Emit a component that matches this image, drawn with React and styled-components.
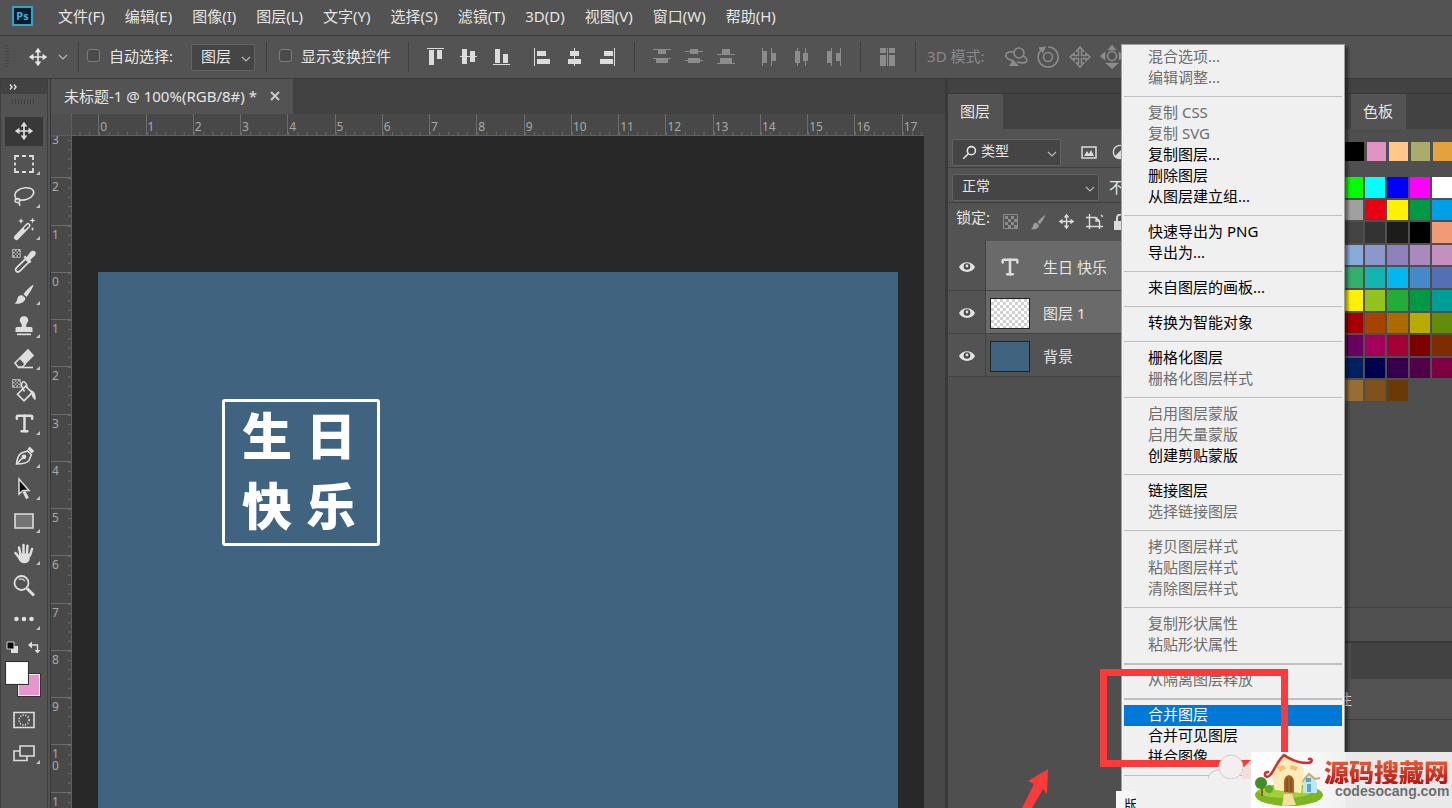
//App.jsx
import styled, { createGlobalStyle, css } from "styled-components";
import { Type } from "lucide-react";

const GlobalStyles = createGlobalStyle`
  * {
    box-sizing: border-box;
  }

  body {
    margin: 0;
    overflow: hidden;
    background: #535353;
    color: #e6e6e6;
    font-family: 'Noto Sans', 'Noto Sans CJK SC', sans-serif;
    font-size: 15px;
    line-height: 20px;
  }

  button, select, input {
    font: inherit;
    color: inherit;
    margin: 0;
  }

  button {
    padding: 0;
    border: none;
    background: none;
  }

  svg {
    display: block;
    flex: none;
  }
`;

const Window = styled.div`
  position: relative;
  display: flex;
  flex-direction: column;
  height: 100vh;
  overflow: hidden;
`;

/* ---------- top bars ---------- */

const MenuBar = styled.nav`
  display: flex;
  align-items: center;
  gap: 20px;
  height: 36px;
  padding: 0 12px 3px;
  border-bottom: 1px solid #3a3a3a;
`;

const Logo = styled.div`
  width: 21px;
  height: 20px;
  margin-right: 5px;
  border: 2px solid #2fa3cc;
  background: #021b2b;
  color: #35b4e0;
  font-size: 11px;
  font-weight: 700;
  line-height: 15px;
  text-align: center;
`;

const MenuButton = styled.button`
  font-size: 15px;
  white-space: nowrap;
`;

const OptionsBar = styled.div`
  display: flex;
  align-items: center;
  height: 43px;
  padding-left: 5px;
  border-bottom: 1px solid #3a3a3a;
  white-space: nowrap;
`;

const Grip = styled.div`
  width: 4px;
  height: 24px;
  margin-right: 19px;
  background: repeating-linear-gradient(#444 0 1px, transparent 1px 3px);
`;

const Divider = styled.div`
  width: 1px;
  height: 30px;
  margin-left: ${(p) => p.$before}px;
  margin-right: ${(p) => p.$after}px;
  background: #404040;
`;

const CheckLabel = styled.label`
  display: flex;
  align-items: center;
  gap: 9px;
  padding-bottom: 3px;
`;

const CheckBox = styled.input`
  appearance: none;
  width: 13px;
  height: 13px;
  border: 1px solid #7d7d7d;
  border-radius: 3px;
  background: #4a4a4a;
`;

const SelectWrap = styled.div`
  position: relative;
  display: flex;
  align-items: center;
  width: ${(p) => p.$width}px;
  height: 27px;
  border: 1px solid #636363;
  border-radius: 2px;
  background: #454545;

  svg {
    position: absolute;
    right: 3px;
    top: 9px;
    pointer-events: none;
  }

  svg.lead {
    left: 9px;
    right: auto;
    top: 5px;
  }
`;

const Select = styled.select`
  appearance: none;
  width: 100%;
  height: 25px;
  padding: 0 0 2px ${(p) => p.$indent || 9}px;
  border: none;
  background: none;
  font-size: ${(p) => p.$size || 15}px;
`;

const IconGroup = styled.div`
  display: flex;
  gap: ${(p) => p.$gap || 0}px;
  margin-left: ${(p) => p.$before || 0}px;
  margin-right: ${(p) => p.$after || 0}px;
`;

const IconButton = styled.button`
  display: flex;
  align-items: center;
  justify-content: center;
  width: ${(p) => p.$width || 32}px;
  height: 28px;
  color: ${(p) => (p.$dim ? "#8c8c8c" : "#dcdcdc")};
`;

const ModeText = styled.span`
  width: 73px;
  padding-bottom: 2px;
  color: #8a8a8a;
`;

/* ---------- workspace ---------- */

const Workspace = styled.div`
  display: flex;
  flex: 1;
  min-height: 0;
`;

const ToolPanel = styled.aside`
  width: 48px;
  flex: none;
  border-left: 1px solid #3e3e3e;
  border-right: 1px solid #3e3e3e;
  background: #535353;
`;

const ToolPanelHead = styled.div`
  height: 15px;
  padding: 5px 0 0 8px;
  background: #424242;
  color: #dcdcdc;
`;

const ToolGrip = styled.div`
  width: 24px;
  height: 5px;
  margin: 5px 0 11px 11px;
  background: repeating-linear-gradient(90deg, #404040 0 1px, transparent 1px 3px);
`;

const ToolList = styled.div`
  display: grid;
  grid-template-rows: repeat(16, 1fr);
  justify-content: center;
  height: 520px;
`;

const Tool = styled.button`
  position: relative;
  display: flex;
  align-items: center;
  justify-content: center;
  width: 38px;
  color: #dedede;

  ${(p) =>
    p.$active &&
    css`
      height: 29px;
      align-self: center;
      background: #383838;
    `}

  ${(p) =>
    p.$more &&
    css`
      &::after {
        content: "";
        position: absolute;
        right: 3px;
        bottom: 5px;
        border: 2px solid transparent;
        border-right-color: #c4c4c4;
        border-bottom-color: #c4c4c4;
      }
    `}
`;

const ColorBlock = styled.div`
  position: relative;
  height: 63px;
  margin-top: 5px;
`;

const ColorChip = styled.button`
  position: absolute;
  left: ${(p) => p.$x}px;
  top: ${(p) => p.$y}px;
  width: 24px;
  height: 24px;
  border: 1px solid #3a2f2f;
  outline: 1px solid #eee;
  outline-offset: -2px;
  background: ${(p) => p.$color};
`;

const SwapRow = styled.div`
  display: flex;
  justify-content: space-between;
  padding: 1px 6px 0 5px;
  color: #dedede;
`;

const ModeTool = styled(Tool)`
  height: 33px;
  margin: 0 auto;
`;

const DocumentArea = styled.main`
  display: flex;
  flex-direction: column;
  flex: 1;
  min-width: 0;
  margin-left: 3px;
  background: #484848;
  box-shadow: -1px 0 0 #383838;
`;

const TabStrip = styled.div`
  display: flex;
  height: 35px;
  flex: none;
  background: #424242;
`;

const DocumentTab = styled.div`
  display: flex;
  align-items: center;
  gap: 13px;
  padding: 0 13px 1px 13px;
  background: #535353;
  white-space: nowrap;
`;

const View = styled.div`
  display: grid;
  grid-template-columns: 21px 1fr 21px;
  grid-template-rows: 22px 1fr;
  flex: 1;
  min-height: 0;
  color: #a8a8a8;
  font-size: 12px;
  line-height: 12px;
`;

const Corner = styled.div`
  border-right: 1px dotted #6a6a6a;
  border-bottom: 1px dotted #6a6a6a;
  background: #4f4f4f;
`;

const TopRuler = styled.div`
  overflow: hidden;
  border-bottom: 1px solid #606060;
`;

const TopScale = styled.div`
  display: grid;
  grid-template-columns: repeat(19, 1fr);
  width: 898px;
  height: 21px;
  margin-left: -21px;

  span {
    padding: 7px 0 0 1px;
    border-left: 1px solid #6c6c6c;
    background: linear-gradient(90deg, #6c6c6c 1px, transparent 1px) 0 100% / 20% 3px repeat-x;
  }
`;

const SideRuler = styled.div`
  overflow: hidden;
  border-right: 1px solid #606060;
`;

const SideScale = styled.div`
  display: grid;
  grid-template-rows: repeat(15, 1fr);
  height: 709px;
  margin-top: -6px;

  span {
    padding: 3px 10px 0 1px;
    border-top: 1px solid #6c6c6c;
    background: linear-gradient(#6c6c6c 1px, transparent 1px) 100% 0 / 3px 20% repeat-y;
    word-break: break-all;
  }
`;

const Stage = styled.div`
  overflow: hidden;
  padding: 136px 0 0 26px;
  background: #282828;
`;

const ScrollTrack = styled.div`
  grid-column: 3;
  grid-row: 1 / 3;
  background: #484848;
`;

const Artboard = styled.div`
  width: 800px;
  height: 800px;
  padding: 127px 0 0 124px;
  background: #40637f;
`;

const Stamp = styled.div`
  display: grid;
  align-content: center;
  gap: 20px;
  width: 158px;
  height: 147px;
  padding: 0 0 9px 17px;
  border: 3px solid #fff;
  border-radius: 3px;
  color: #fff;
  font-family: 'Noto Sans CJK SC', sans-serif;
  font-size: 50px;
  font-weight: 900;
  line-height: 50px;

  div {
    display: flex;
    gap: 14px;
  }
`;

/* ---------- right panels ---------- */

const Panel = styled.section`
  display: flex;
  flex-direction: column;
  width: ${(p) => p.$width}px;
  flex: none;
  background: #4f4f4f;
  border-left: ${(p) => (p.$edge ? "3px solid #393939" : "none")};
  overflow: hidden;
`;

const PanelHead = styled.div`
  height: 15px;
  flex: none;
  border-bottom: 1px solid #353535;
  background: #424242;
`;

const PanelTabs = styled.div`
  height: 35px;
  flex: none;
  padding-left: ${(p) => p.$indent || 0}px;
  background: #424242;
`;

const PanelTab = styled.button`
  height: 35px;
  padding: 0 13px 2px 12px;
  background: #535353;
`;

const PanelRow = styled.div`
  display: flex;
  align-items: center;
  height: ${(p) => p.$height}px;
  padding: ${(p) => p.$pad || "0 0 0 4px"};
  flex: none;
  border-bottom: 1px solid ${(p) => (p.$plain ? "transparent" : "#3f3f3f")};
  background: #535353;
  white-space: nowrap;
`;

const LockIcons = styled.div`
  display: flex;
  align-items: center;
  gap: 11px;
  margin-left: 13px;
  padding-top: 9px;
  color: #dcdcdc;
`;

const LayerRow = styled.div`
  display: grid;
  grid-template-columns: 38px 48px 1fr;
  align-items: stretch;
  height: ${(p) => p.$height}px;
  flex: none;
  border-bottom: 1px solid #424242;
  background: ${(p) => (p.$selected ? "#6a6a6a" : "#535353")};
`;

const EyeCell = styled.button`
  display: flex;
  align-items: center;
  justify-content: center;
  padding-top: 2px;
  border-right: 1px solid #424242;
  background: #535353;
`;

const ThumbCell = styled.div`
  display: flex;
  align-items: center;
  padding: 2px 0 0 4px;
  color: #dcdcdc;
`;

const Thumb = styled.div`
  width: 40px;
  height: 31px;
  border: 1px solid #222;
  background: ${(p) => p.$fill};
`;

const LayerName = styled.span`
  align-self: center;
  padding: 2px 0 0 9px;
`;

const RecentSwatches = styled.div`
  display: flex;
  gap: 3px;
  flex: none;
  padding: 13px 0 16px 25px;
`;

const SwatchGrid = styled.div`
  display: grid;
  grid-template-columns: repeat(5, 1fr);
  grid-template-rows: repeat(10, 1fr);
  gap: 2px;
  width: 111px;
  height: 224px;
  flex: none;
  margin-left: 22px;
`;

const Swatch = styled.button`
  min-width: 19px;
  min-height: 19px;
  background: ${(p) => p.$color};
`;

const PanelFoot = styled.div`
  height: 36px;
  margin-top: 206px;
  flex: none;
  border-top: 1px solid #424242;
  border-bottom: 2px solid #393939;
  background: #505050;
`;

const PropertyStrip = styled.div`
  height: 36px;
  flex: none;
  margin-left: 31px;
  background: #424242;
`;

/* ---------- overlays ---------- */

const ContextMenu = styled.ul`
  position: absolute;
  top: 44px;
  right: 107px;
  bottom: -20px;
  width: 224px;
  margin: 0;
  padding: 2px 2px 0;
  border: 1px solid #a0a0a0;
  background: #f0f0f0;
  box-shadow: 3px 3px 3px rgba(0, 0, 0, 0.45);
  list-style: none;
`;

const MenuItem = styled.button`
  display: block;
  width: 100%;
  height: 21px;
  padding: 0 0 3px 24px;
  background: ${(p) => (p.$selected ? "#0078d7" : "none")};
  color: ${(p) => (p.$selected ? "#fff" : "#000")};
  line-height: 18px;
  text-align: left;

  &:disabled {
    color: #6d6d6d;
  }
`;

const MenuLine = styled.li`
  height: ${(p) => (p.$thick ? 2 : 1)}px;
  margin: 7px 0 ${(p) => (p.$thick ? 5 : 6)}px;
  background: #bdbfc1;
`;

const Highlight = styled.div`
  position: absolute;
  top: 669px;
  right: 164px;
  width: 188px;
  height: 98px;
  border: 7px solid #fb3a3a;
`;

const Arrow = styled.svg`
  position: absolute;
  top: 768px;
  right: 403px;
`;

const Clouds = styled.svg`
  position: absolute;
  top: 750px;
  right: 200px;
`;

const StrayLabel = styled.div`
  position: absolute;
  top: 791px;
  right: 316px;
  width: 20px;
  height: 30px;
  padding: 4px 0 0 8px;
  overflow: hidden;
  background: #f6f6f6;
  color: #111;
`;

const Watermark = styled.a`
  position: absolute;
  top: 752px;
  right: 0;
  display: flex;
  width: 201px;
  height: 56px;
  background: linear-gradient(90deg, #fdfdfd 0 40px, #f0f0f0 94px, #e9e9e9 94px);
  text-decoration: none;
`;

const WatermarkText = styled.div`
  padding-top: 6px;
  font-weight: 700;

  strong {
    display: block;
    background: linear-gradient(#f0623a, #b81414);
    background-clip: text;
    color: transparent;
    font-family: 'Noto Sans CJK SC', sans-serif;
    font-size: 25px;
    font-weight: 900;
    line-height: 26px;
  }

  small {
    display: block;
    padding-left: 11px;
    color: #6e6e6e;
    font-family: 'Liberation Sans', sans-serif;
    font-size: 14px;
    line-height: 14px;
  }
`;

/* ---------- icons ---------- */

function Icon({ size = 24, children, ...rest }) {
  return (
    <svg
      width={size}
      height={size}
      viewBox="0 0 24 24"
      fill="none"
      stroke="currentColor"
      strokeWidth="1.6"
      {...rest}
    >
      {children}
    </svg>
  );
}

const MoveIcon = ({ size = 24 }) => (
  <Icon size={size} strokeWidth="2">
    <path d="M12 4v16M4 12h16" />
    <path
      d="M12 1l4 5.500h-8zM12 23l-4-5.500h8zM1 12l5.500-4v8zM23 12l-5.500 4v-8z"
      fill="currentColor"
      stroke="none"
    />
  </Icon>
);

const Chevron = () => (
  <svg width="10" height="10" viewBox="0 0 10 10" fill="none" stroke="#b8b8b8" strokeWidth="1.2">
    <path d="M1 3l4 4 4-4" />
  </svg>
);

const BrushIcon = ({ size = 24, color = "currentColor" }) => (
  <Icon size={size} fill={color} stroke="none">
    <path d="M21.5 2.5c-3 1.500-8 6.500-10 9.800l3 2.700c2.700-3.500 6.500-9 7-12.500z" />
    <path d="M10.300 13.200c-3-.4-4.500 1.300-5 3.800-.3 2-1.300 3.500-2.800 4.500 4.500.8 10-.3 11-5.300z" />
  </Icon>
);

const checker = (
  <>
    <path d="M1 1h8v8H1z" fill="#b4b4b4" stroke="none" />
    <path
      d="M2 2h1.500v1.500H2zM5 2h1.500v1.500H5zM3.500 3.500H5V5H3.500zM6.500 3.500H8V5H6.500zM2 5h1.500v1.500H2zM5 5h1.500v1.500H5zM3.500 6.500H5V8H3.500zM6.500 6.500H8V8H6.500z"
      fill="#3a3a3a"
      stroke="none"
    />
  </>
);

const tools = [
  { name: "move", icon: <MoveIcon size={20} />, active: true },
  {
    name: "marquee",
    icon: (
      <Icon>
        <path d="M3 8V4h4M10 4h4M17 4h4v4M21 10.500v3M21 16v4h-4M14 20h-4M7 20H3v-4M3 13.500v-3" strokeWidth="1.800" />
      </Icon>
    ),
  },
  {
    name: "lasso",
    icon: (
      <Icon>
        <path d="M5.500 16C2 13.500 2 9 5.500 6.500 9.500 3.500 17 2.500 20.500 5.500c3 3 0 8-5.500 9.800-3 1-6.500 1-8.500.2" />
        <path d="M8 16.500c0 1.500-1.300 2-2.500 2s-2.500-.7-2.500-2 1-2 2.500-2 2.500.7 2.500 2zM6 18.500c1.500.5 2 1.800 1.500 3.500" strokeWidth="1.400" />
      </Icon>
    ),
  },
  {
    name: "wand",
    icon: (
      <Icon>
        <path d="M4.500 20.500L16 8.500" strokeWidth="5" strokeLinecap="round" />
        <path d="M13 11.500l3-3" stroke="#535353" strokeWidth="2" strokeLinecap="round" />
        <path
          d="M9 1l.8 2.200L12 4l-2.200.8L9 7l-.8-2.200L6 4l2.200-.8zM20.500.5l.8 2.200 2.200.8-2.200.8-.8 2.200-.8-2.200-2.200-.8 2.200-.8zM20.500 10l.6 1.400 1.400.6-1.400.6-.6 1.400-.6-1.400-1.400-.6 1.400-.6z"
          fill="currentColor"
          stroke="none"
        />
      </Icon>
    ),
  },
  {
    name: "eyedropper",
    plain: true,
    icon: (
      <Icon size={26}>
        {checker}
        <path d="M5 21.500c-1.200-1-.8-2.300.2-3.300L13.500 10l3 3-8.200 8.200c-1 1-2.200 1.300-3.300.3z" />
        <path
          d="M11.500 8.500l1.500-1.500 1.500 1.200 3.200-4.200c1.500-1.800 3.500-1.800 4.500-.8s1 3-.8 4.500l-3.700 3.300 1.200 1.500-1.500 1.500z"
          fill="currentColor"
          stroke="none"
        />
      </Icon>
    ),
  },
  { name: "brush", icon: <BrushIcon /> },
  {
    name: "stamp",
    icon: (
      <Icon fill="currentColor" stroke="none">
        <path d="M12 2a4.200 4.200 0 0 1 3 7.200c-.8.900-1 2.300-.5 3.800H19c1 0 1.500.8 1.500 1.800V18h-17v-3.200c0-1 .5-1.800 1.500-1.800h4.500c.5-1.500.3-2.900-.5-3.800A4.200 4.200 0 0 1 12 2z" />
        <path d="M5 19.500h14v1.700H5z" />
      </Icon>
    ),
  },
  {
    name: "eraser",
    icon: (
      <Icon>
        <path d="M8 11l8-8 5 5.500-8 8z" fill="currentColor" />
        <path d="M8 11l-5 5 3 4h4.500l3-3.500" />
        <path d="M6 20.500h15" />
      </Icon>
    ),
  },
  {
    name: "bucket",
    plain: true,
    icon: (
      <Icon size={26}>
        {checker}
        <path d="M6 15l7.500-7.500 6 6-7.500 7.500z" />
        <path d="M12.500 12.500C10 9 9 5.500 10.500 4s3.500.5 4.500 4" strokeWidth="1.400" />
        <path d="M18.500 12c3 1 3.500 3 3.500 7-1.300-.5-1.800-3-3.500-7z" fill="currentColor" />
      </Icon>
    ),
  },
  { name: "type", icon: <Type size={23} strokeWidth={2.600} /> },
  {
    name: "pen",
    icon: (
      <Icon>
        <path d="M4.500 20c.5-5 1.500-9 5-11l6-2 3.800 3.800-2.300 5.500C15 19.500 10.500 20 4.500 20z" />
        <path d="M4.500 20l6.500-6.500" />
        <circle cx="12" cy="12.800" r="1.600" fill="currentColor" />
        <path d="M15.500 5l2.200-2.500 4.500 4.500-2.400 2.400z" fill="currentColor" stroke="none" />
      </Icon>
    ),
  },
  {
    name: "select",
    icon: (
      <Icon>
        <path d="M12 14.500l3.500 7" strokeWidth="3" />
        <path d="M7 2v15l4-3.500h6z" fill="#0a0a0a" strokeWidth="1.500" />
      </Icon>
    ),
  },
  {
    name: "rectangle",
    icon: (
      <Icon>
        <path d="M3 5h18v14H3z" fill="#757575" />
      </Icon>
    ),
  },
  {
    name: "hand",
    icon: (
      <Icon strokeLinecap="round">
        <path d="M8.500 13L7 5.500M11.500 12V3M14.800 12l.7-8.300M18 13.500l2-6.500M7.500 16L3.500 11" strokeWidth="2.500" />
        <path d="M7.500 11.500h10.800l-.8 6c-.5 2.500-2.500 3.800-5 3.800-3 0-4.500-1.300-6-4.300z" fill="currentColor" stroke="none" />
      </Icon>
    ),
  },
  {
    name: "zoom",
    plain: true,
    icon: (
      <Icon>
        <circle cx="9.500" cy="9" r="7" strokeWidth="1.800" />
        <path d="M15 14.500l7 7" strokeWidth="3" />
        <path d="M7 5.500c2-1 4.500-.3 5.800 1.700" strokeWidth="1.200" />
      </Icon>
    ),
  },
  {
    name: "more",
    icon: (
      <Icon fill="currentColor" stroke="none">
        <circle cx="4.500" cy="12" r="2.300" />
        <circle cx="12" cy="12" r="2.300" />
        <circle cx="19.500" cy="12" r="2.300" />
      </Icon>
    ),
  },
];

// every shape is [x, y, width, height] on an 18px square
const alignIcons = {
  top: [[0, 0, 17, 1], [2, 2, 5, 15], [10, 2, 5, 9]],
  middle: [[0, 8, 17, 1], [2, 1, 5, 15], [10, 3, 5, 11]],
  bottom: [[0, 16, 17, 1], [2, 1, 5, 14], [10, 6, 5, 9]],
  left: [[0, 0, 1, 18], [3, 3, 9, 5], [3, 11, 13, 5]],
  center: [[8, 0, 1, 18], [4, 3, 9, 5], [2, 11, 13, 5]],
  right: [[16, 0, 1, 18], [6, 3, 9, 5], [2, 11, 13, 5]],
  distTop: [[0, 1, 18, 1], [5, 2, 8, 4], [0, 10, 18, 1], [3, 11, 12, 4]],
  distMiddle: [[0, 3, 18, 1], [5, 1, 8, 5], [0, 12, 18, 1], [3, 10, 12, 5]],
  distBottom: [[0, 6, 18, 1], [5, 1, 8, 5], [0, 15, 18, 1], [3, 10, 12, 5]],
  distLeft: [[1, 0, 1, 18], [2, 3, 4, 12], [10, 0, 1, 18], [11, 5, 4, 8]],
  distCenter: [[4, 0, 1, 18], [2, 3, 5, 12], [12, 0, 1, 18], [10, 5, 5, 8]],
  distRight: [[6, 0, 1, 18], [2, 3, 4, 12], [15, 0, 1, 18], [11, 5, 4, 8]],
  spacing: [[1, 0, 6, 5], [10, 0, 6, 5], [1, 7, 6, 11], [10, 7, 6, 11], [8, 0, 1, 18]],
};

const AlignIcon = ({ name }) => (
  <svg width="18" height="18" fill="currentColor">
    {alignIcons[name].map(([x, y, w, h]) => (
      <rect key={`${x}-${y}`} x={x} y={y} width={w} height={h} />
    ))}
  </svg>
);

const modeIcons = {
  orbit: (
    <Icon>
      <circle cx="15" cy="8" r="5" />
      <path d="M10 7C4 6 1 8.500 2 11.500c1 2 3 3.500 7 4M19 11c3 1 5 4 3 6-2 1.500-5 1-9 0" />
      <path d="M9 14.500l-4 6.500h10z" fill="currentColor" stroke="none" />
    </Icon>
  ),
  roll: (
    <Icon>
      <circle cx="12" cy="12" r="4.500" />
      <path d="M5 5a10 10 0 1 0 7-3" />
      <path d="M2 2.500l8-1-3 7z" fill="currentColor" stroke="none" />
    </Icon>
  ),
  pan: (
    <Icon strokeWidth="1.500">
      <path d="M12 2L8.500 6h2v4.500H6v-2L2 12l4 3.500v-2h4.500V18h-2l3.500 4 3.500-4h-2v-4.500H18v2l4-3.500-4-3.500v2h-4.500V6h2z" />
    </Icon>
  ),
  slide: (
    <Icon>
      <circle cx="12" cy="11" r="4.500" />
      <path d="M12 1l3 3.500H9zM12 23l-5-4.500h10zM1 11l3.500-3v6zM23 11l-3.500-3v6z" fill="currentColor" />
    </Icon>
  ),
};

const Eye = () => (
  <svg width="16" height="12" viewBox="0 0 16 12">
    <path d="M0 6c3-6.500 13-6.500 16 0-3 6.500-13 6.500-16 0z" fill="#e4e4e4" />
    <circle cx="8" cy="5.500" r="3.300" fill="#484848" />
    <circle cx="8" cy="5" r="1.400" fill="#e4e4e4" />
  </svg>
);

const House = () => (
  <svg width="73" height="56" viewBox="0 0 73 56">
    <ellipse cx="38" cy="43" rx="34" ry="11" fill="#7fb51f" />
    <ellipse cx="34" cy="40" rx="26" ry="6" fill="#a3cf38" />
    <path d="M33 42h8l4 11-14 1z" fill="#f6dfa0" />
    <path d="M10 32v12h2V32z" fill="#8a5a22" />
    <circle cx="10" cy="31" r="6" fill="#3f8f22" />
    <circle cx="18" cy="37" r="4" fill="#5fa72b" />
    <path d="M52 30l8-7 6 8v10H52z" fill="#bfe5f2" />
    <path d="M50 31l8-9 6 5 5-1" fill="none" stroke="#d9a45c" strokeWidth="2" />
    <path d="M55 26h5v4h-5zM56 32h4v8h-4z" fill="#57a5cc" />
    <path d="M20 22L33 4l20 12-3 25-26-3z" fill="#fcebb4" />
    <path d="M26 15l6-2 3 3-6 4zM40 13l7 2-2 4-6-2z" fill="#f3bd7a" />
    <path d="M33 40V30c0-9 10-9 10 0v11z" fill="#a5622a" />
    <path d="M36 26v14M40 26v14" stroke="#7c431a" />
    <path
      d="M17 20c-4 0-4 4-1 5 5 0 9-15 17-22 7 5 16 8 23 8 6 0 6-5 2-4"
      fill="none"
      stroke="#d32f2b"
      strokeWidth="2.500"
      strokeLinecap="round"
    />
  </svg>
);

/* ---------- data ---------- */

const menus = ["文件(F)", "编辑(E)", "图像(I)", "图层(L)", "文字(Y)", "选择(S)", "滤镜(T)", "3D(D)", "视图(V)", "窗口(W)", "帮助(H)"];

const topNumbers = ["", 0, 1, 2, 3, 4, 5, 6, 7, 8, 9, 10, 11, 12, 13, 14, 15, 16, 17];
const sideNumbers = [3, 2, 1, 0, 1, 2, 3, 4, 5, 6, 7, 8, 9, 10, 11];

const recent = ["#000", "#e293c6", "#ffc78c", "#aaab6c", "#e3a23d"];

const swatches = [
  "#00ff00", "#00ffff", "#0000ff", "#ff00ff", "#ffffff",
  "#a0a0a0", "#e60012", "#fff100", "#009944", "#00a0e9",
  "#444444", "#333333", "#1c1c1a", "#000000", "#f19b76",
  "#88abda", "#8c97cb", "#8f82bc", "#aa89bd", "#c490bf",
  "#32b16c", "#13b5b1", "#00b7ee", "#448aca", "#556fb5",
  "#fff100", "#8fc31f", "#22ac38", "#009944", "#009e96",
  "#a40000", "#a84200", "#ac6a00", "#b7aa00", "#638c0b",
  "#6a005f", "#a4005b", "#a40035", "#7d0000", "#7f2d00",
  "#002060", "#00004f", "#36004f", "#500047", "#7e0043",
  "#996c33", "#81511c", "#6a3906",
];

// "-" and "=" draw a thin or thick line, "*" marks a disabled entry, ">" the selected one
const contextItems = [
  "*混合选项...", "*编辑调整...", "-",
  "*复制 CSS", "*复制 SVG", "复制图层...", "删除图层", "从图层建立组...", "-",
  "快速导出为 PNG", "导出为...", "-",
  "来自图层的画板...", "-",
  "转换为智能对象", "-",
  "栅格化图层", "*栅格化图层样式", "-",
  "*启用图层蒙版", "*启用矢量蒙版", "创建剪贴蒙版", "-",
  "链接图层", "*选择链接图层", "-",
  "*拷贝图层样式", "*粘贴图层样式", "*清除图层样式", "-",
  "*复制形状属性", "*粘贴形状属性", "=",
  "*从隔离图层释放", "=",
  ">合并图层", "合并可见图层", "拼合图像", "-",
];

const transparentFill = "repeating-conic-gradient(#d0d0d0 0 25%, #fff 0 50%) 0 0 / 6px 6px";

const alignGroup = (names, dim) =>
  names.map((name) => (
    <IconButton key={name} $dim={dim} aria-label={name}>
      <AlignIcon name={name} />
    </IconButton>
  ));

function App() {
  return (
    <Window>
      <GlobalStyles />
      <MenuBar>
        <Logo>Ps</Logo>
        {menus.map((label) => (
          <MenuButton key={label}>{label}</MenuButton>
        ))}
      </MenuBar>

      <OptionsBar>
        <Grip />
        <MoveIcon size={20} />
        <IconButton $width={29} aria-label="presets">
          <Chevron />
        </IconButton>
        <Divider $before={1} $after={8} />
        <CheckLabel>
          <CheckBox type="checkbox" />
          自动选择:
        </CheckLabel>
        <IconGroup $after={18} />
        <SelectWrap $width={64}>
          <Select aria-label="自动选择">
            <option>图层</option>
          </Select>
          <Chevron />
        </SelectWrap>
        <Divider $before={11} $after={12} />
        <CheckLabel>
          <CheckBox type="checkbox" />
          显示变换控件
        </CheckLabel>
        <Divider $before={17} $after={11} />
        <IconGroup $gap={1} $after={9}>{alignGroup(["top", "middle", "bottom"])}</IconGroup>
        <IconGroup>{alignGroup(["left", "center", "right"])}</IconGroup>
        <Divider $before={11} $after={11} />
        <IconGroup $after={12}>{alignGroup(["distTop", "distMiddle", "distBottom"], true)}</IconGroup>
        <IconGroup>{alignGroup(["distLeft", "distCenter", "distRight"], true)}</IconGroup>
        <Divider $before={10} $after={11} />
        {alignGroup(["spacing"], true)}
        <Divider $before={11} $after={11} />
        <ModeText>3D 模式:</ModeText>
        {Object.keys(modeIcons).map((name) => (
          <IconButton key={name} $dim aria-label={name}>
            {modeIcons[name]}
          </IconButton>
        ))}
      </OptionsBar>

      <Workspace>
        <ToolPanel>
          <ToolPanelHead>
            <svg width="8" height="6" fill="none" stroke="currentColor" strokeWidth="1.500">
              <path d="M1 .5L3 3 1 5.500M5 .5L7 3 5 5.500" />
            </svg>
          </ToolPanelHead>
          <ToolGrip />
          <ToolList>
            {tools.map((t) => (
              <Tool key={t.name} $active={t.active} $more={!t.active && !t.plain} aria-label={t.name}>
                {t.icon}
              </Tool>
            ))}
          </ToolList>
          <ColorBlock>
            <SwapRow>
              <svg width="13" height="13">
                <path d="M5 5h7v7H5z" fill="#dedede" />
                <path d="M1 1h7v7H1z" fill="#0a0a0a" stroke="#cfcfcf" />
              </svg>
              <svg width="13" height="13" fill="none" stroke="currentColor" strokeWidth="1.400">
                <path d="M2 4h7.500v7" />
                <path d="M0 4l4-3.500v7zM9.500 12.500l-3-3.500h6z" fill="currentColor" stroke="none" />
              </svg>
            </SwapRow>
            <ColorChip $x={16} $y={33} $color="#e796cb" aria-label="background colour" />
            <ColorChip $x={4} $y={21} $color="#fff" aria-label="foreground colour" />
          </ColorBlock>
          <ModeTool as="div">
            <Icon>
              <path d="M2 4.500h20v15H2z" />
              <circle cx="12" cy="12" r="5" strokeDasharray="1.200 1.500" />
            </Icon>
          </ModeTool>
          <ModeTool as="div" $more>
            <Icon>
              <path d="M2 10h13v9.500H2z" />
              <path d="M8 5h14v10H8z" fill="#535353" />
            </Icon>
          </ModeTool>
        </ToolPanel>

        <DocumentArea>
          <TabStrip>
            <DocumentTab>
              <span>未标题-1 @ 100%(RGB/8#) *</span>
              <button aria-label="close">
                <svg width="10" height="10" stroke="#c8c8c8" strokeWidth="2">
                  <path d="M1 1l8 8M9 1l-8 8" />
                </svg>
              </button>
            </DocumentTab>
          </TabStrip>
          <View>
            <Corner />
            <TopRuler>
              <TopScale>
                {topNumbers.map((n) => (
                  <span key={n}>{n}</span>
                ))}
              </TopScale>
            </TopRuler>
            <ScrollTrack />
            <SideRuler>
              <SideScale>
                {sideNumbers.map((n, i) => (
                  <span key={i}>{n}</span>
                ))}
              </SideScale>
            </SideRuler>
            <Stage>
              <Artboard>
                <Stamp>
                  <div>
                    <span>生</span>
                    <span>日</span>
                  </div>
                  <div>
                    <span>快</span>
                    <span>乐</span>
                  </div>
                </Stamp>
              </Artboard>
            </Stage>
          </View>
        </DocumentArea>

        <Panel $width={375} $edge>
          <PanelHead />
          <PanelTabs>
            <PanelTab>图层</PanelTab>
          </PanelTabs>
          <PanelRow $height={39} $pad="8px 0 0 4px">
            <SelectWrap $width={109}>
              <Icon className="lead" size={15} strokeWidth="2.600">
                <circle cx="15" cy="9" r="6.500" />
                <path d="M10 14l-8 8" />
              </Icon>
              <Select $indent={28} $size={14} aria-label="类型">
                <option>类型</option>
              </Select>
              <Chevron />
            </SelectWrap>
            <IconGroup $before={20} $gap={15}>
              <IconButton $width={16} aria-label="pixel layers">
                <svg width="16" height="13" fill="none" stroke="currentColor" strokeWidth="1.500">
                  <path d="M1 1h14v11H1z" />
                  <path d="M3 10l3-5 2 3 2-4 3 6z" fill="currentColor" stroke="none" />
                </svg>
              </IconButton>
              <IconButton $width={16} aria-label="adjustment layers">
                <Icon size={16} strokeWidth="2">
                  <circle cx="12" cy="12" r="10" />
                  <path d="M19 5L5 19A10 10 0 0 0 19 5z" fill="currentColor" />
                </Icon>
              </IconButton>
            </IconGroup>
          </PanelRow>
          <PanelRow $height={35} $pad="4px 0 0 4px">
            <SelectWrap $width={147}>
              <Select $size={14} aria-label="混合模式">
                <option>正常</option>
              </Select>
              <Chevron />
            </SelectWrap>
            <IconGroup $after={10} />
            不
          </PanelRow>
          <PanelRow $height={38} $pad="0 0 9px 8px" $plain>
            <span>锁定:</span>
            <LockIcons>
              <svg width="15" height="15" fill="none" stroke="#8c8c8c">
                <path d="M.5.5h14v14H.5z" />
                <path
                  d="M2 2h3v3H2zM8 2h3v3H8zM5 5h3v3H5zM11 5h3v3h-3zM2 8h3v3H2zM8 8h3v3H8zM5 11h3v3H5zM11 11h3v3h-3z"
                  fill="#8c8c8c"
                  stroke="none"
                />
              </svg>
              <BrushIcon size={18} color="#9a9a9a" />
              <MoveIcon size={17} />
              <svg width="17" height="15" fill="none" stroke="currentColor" strokeWidth="1.400">
                <path d="M3.500 0v15M0 3.500h10l3.500 3.500v8M0 12.500h17M10 3v4h4M15 1l2 2" />
              </svg>
              <svg width="13" height="16" fill="currentColor">
                <path d="M0 7h13v9H0z" />
                <path d="M3 8V4a3.500 3.500 0 0 1 7 0v4" fill="none" stroke="currentColor" strokeWidth="2" />
              </svg>
            </LockIcons>
          </PanelRow>
          <LayerRow $height={50} $selected>
            <EyeCell aria-label="visibility">
              <Eye />
            </EyeCell>
            <ThumbCell>
              <IconGroup $after={9} />
              <Type size={22} strokeWidth={2.800} />
            </ThumbCell>
            <LayerName>生日 快乐</LayerName>
          </LayerRow>
          <LayerRow $height={43} $selected>
            <EyeCell aria-label="visibility">
              <Eye />
            </EyeCell>
            <ThumbCell>
              <Thumb $fill={transparentFill} />
            </ThumbCell>
            <LayerName>图层 1</LayerName>
          </LayerRow>
          <LayerRow $height={43}>
            <EyeCell aria-label="visibility">
              <Eye />
            </EyeCell>
            <ThumbCell>
              <Thumb $fill="#40637f" />
            </ThumbCell>
            <LayerName>背景</LayerName>
          </LayerRow>
        </Panel>

        <Panel $width={132}>
          <PanelHead />
          <PanelTabs $indent={31}>
            <PanelTab>色板</PanelTab>
          </PanelTabs>
          <RecentSwatches>
            {recent.map((c) => (
              <Swatch key={c} $color={c} aria-label={c} />
            ))}
          </RecentSwatches>
          <SwatchGrid>
            {swatches.map((c, i) => (
              <Swatch key={i} $color={c} aria-label={c} />
            ))}
          </SwatchGrid>
          <PanelFoot />
          <PropertyStrip />
          <PanelRow $height={41} $pad="0 0 0 2px">属性</PanelRow>
        </Panel>
      </Workspace>

      <ContextMenu>
        {contextItems.map((item, i) =>
          item === "-" || item === "=" ? (
            <MenuLine key={i} $thick={item === "="} />
          ) : (
            <li key={i}>
              <MenuItem disabled={item[0] === "*"} $selected={item[0] === ">"}>
                {item.replace(/^[*>]/, "")}
              </MenuItem>
            </li>
          )
        )}
      </ContextMenu>

      <Highlight />
      <Arrow width="28" height="40" fill="#fb3a3a">
        <path d="M27 1L7 13l6 3L1 40h10l11-19 4 5z" />
      </Arrow>
      <Clouds width="92" height="58">
        <path d="M40 26h52v32H40z" fill="#f0f0f0" />
        <circle cx="58" cy="30" r="10" fill="#f0f0f0" stroke="#c9c9c9" />
        <circle cx="71" cy="17" r="12" fill="#f4eeee" stroke="#d4cccc" />
        <path d="M84 17l8-8v20H82z" fill="#f3dede" />
        <path d="M44 29h48v29H44z" fill="#f0f0f0" />
      </Clouds>
      <StrayLabel>版</StrayLabel>
      <Watermark href="#">
        <House />
        <WatermarkText>
          <strong>源码搜藏网</strong>
          <small>codesocang.com</small>
        </WatermarkText>
      </Watermark>
    </Window>
  );
}

export default App;
